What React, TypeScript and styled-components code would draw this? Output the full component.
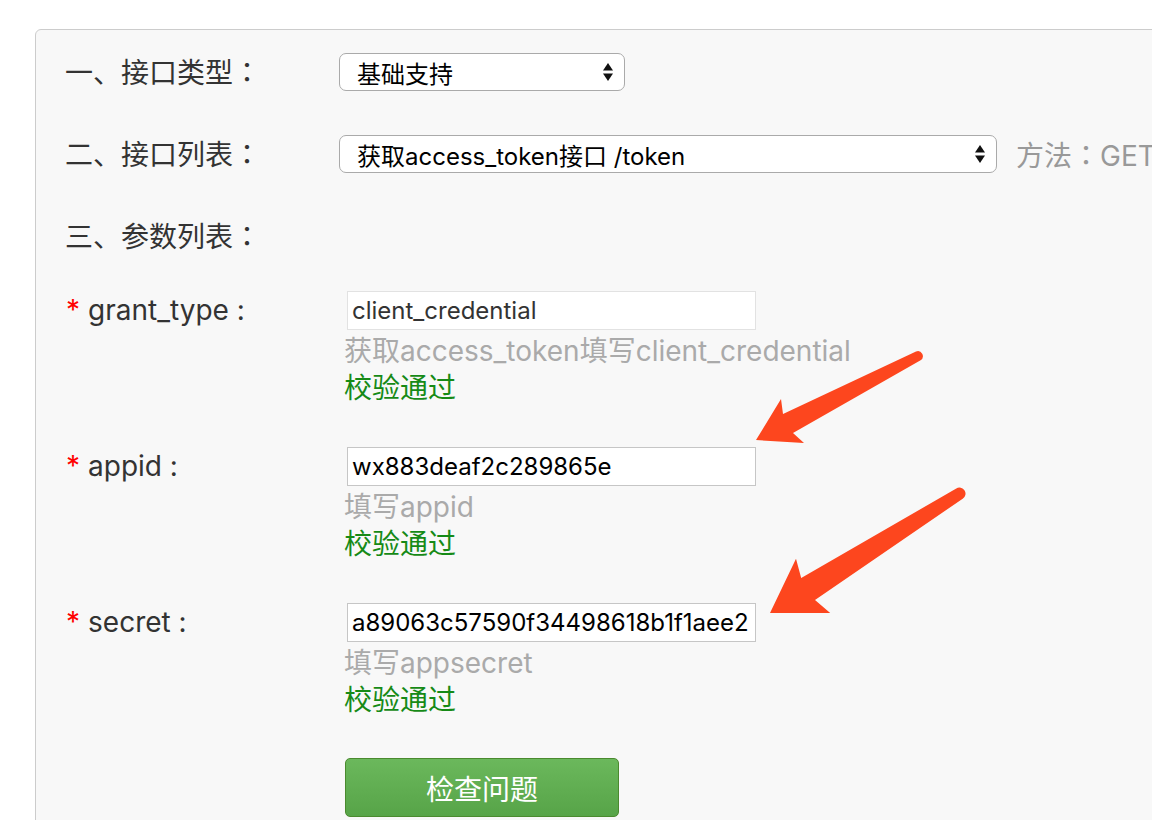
import React from 'react';
import styled, { createGlobalStyle } from 'styled-components';

const FONT = `Inter, "Noto Sans CJK SC", sans-serif`;

const GlobalStyle = createGlobalStyle`
  html, body {
    margin: 0;
    padding: 0;
    background: #ffffff;
    overflow: hidden;
  }
  body {
    font-family: ${FONT};
    color: #333333;
  }
`;

const Page = styled.div`
  position: relative;
  width: 1152px;
  height: 820px;
  overflow: hidden;
  padding: 29px 0 0 35px;
  box-sizing: border-box;
`;

const Panel = styled.div`
  width: 1200px;
  min-height: 900px;
  box-sizing: border-box;
  background: #f8f8f8;
  border: 1px solid #cccccc;
  border-radius: 6px;
  padding: 23px 0 0 29px;
`;

const TopRow = styled.div`
  display: flex;
  align-items: center;
  height: 38px;
  margin-bottom: 44px;
`;

const Label = styled.div`
  width: 274px;
  flex: 0 0 274px;
  font-size: 28px;
  line-height: 38px;
  color: #333333;
  white-space: nowrap;
`;

const Colon = styled.span`
  font-family: "Noto Sans CJK TC", sans-serif;
`;

const SelectBox = styled.div<{ $width: number }>`
  width: ${({ $width }) => $width}px;
  height: 38px;
  box-sizing: border-box;
  background: #ffffff;
  border: 1px solid #aaaaaa;
  border-radius: 7px;
  display: flex;
  align-items: center;
  justify-content: space-between;
  padding: 0 10px 0 17px;
  font-size: 24px;
  color: #000000;
  white-space: nowrap;
`;

const Method = styled.span`
  margin-left: 19px;
  font-size: 28px;
  color: #999999;
  white-space: nowrap;
`;

const ParamList = styled.div`
  margin-top: -8px;
`;

const ParamBlock = styled.div`
  display: flex;
  margin-bottom: 40px;
`;

const ParamLabel = styled.div`
  width: 274px;
  flex: 0 0 274px;
  height: 39px;
  font-size: 28px;
  line-height: 39px;
  color: #333333;
  padding-left: 1px;
  box-sizing: border-box;
  white-space: nowrap;
`;

const Star = styled.span`
  color: #ff0000;
  margin-right: 8px;
`;

const ParamBody = styled.div`
  display: flex;
  flex-direction: column;
  padding-left: 5px;
`;

const TextInput = styled.input<{ $light?: boolean }>`
  width: 409px;
  height: 39px;
  box-sizing: border-box;
  margin: 0 0 3px 3px;
  padding: 0 4px;
  border: 1px solid ${({ $light }) => ($light ? '#e2e2e2' : '#c6c6c6')};
  background: #ffffff;
  font-family: ${FONT};
  font-size: 24px;
  color: ${({ $light }) => ($light ? '#333333' : '#000000')};
  outline: none;
`;

const Hint = styled.div`
  font-size: 28px;
  line-height: 37px;
  color: #aaaaaa;
  white-space: nowrap;
`;

const Pass = styled.div`
  font-size: 28px;
  line-height: 37px;
  color: #168a16;
  white-space: nowrap;
`;

const ButtonRow = styled.div`
  padding-left: 280px;
  margin-top: -1px;
`;

const CheckButton = styled.button`
  width: 274px;
  height: 59px;
  box-sizing: border-box;
  border: 1px solid #4b8a2f;
  border-radius: 5px;
  background: linear-gradient(#6bb85c, #57a448);
  color: #ffffff;
  font-family: ${FONT};
  font-size: 28px;
  cursor: pointer;
`;

const Overlay = styled.svg`
  position: absolute;
  left: 0;
  top: 0;
  pointer-events: none;
`;

const Spinner = () => (
  <svg width="12" height="20" viewBox="0 0 12 20">
    <path d="M6 1 L11 8.5 L1 8.5 Z" fill="#111" />
    <path d="M6 19 L11 11.5 L1 11.5 Z" fill="#111" />
  </svg>
);

const params = [
  {
    name: 'grant_type',
    value: 'client_credential',
    hint: '获取access_token填写client_credential',
    light: true,
  },
  { name: 'appid', value: 'wx883deaf2c289865e', hint: '填写appid', light: false },
  {
    name: 'secret',
    value: 'a89063c57590f34498618b1f1aee2',
    hint: '填写appsecret',
    light: false,
  },
];

export default function App() {
  return (
    <>
      <GlobalStyle />
      <Page>
        <Panel>
          <TopRow>
            <Label>
              一、接口类型<Colon>：</Colon>
            </Label>
            <SelectBox $width={286}>
              <span>基础支持</span>
              <Spinner />
            </SelectBox>
          </TopRow>
          <TopRow>
            <Label>
              二、接口列表<Colon>：</Colon>
            </Label>
            <SelectBox $width={658}>
              <span>获取access_token接口 /token</span>
              <Spinner />
            </SelectBox>
            <Method>
              方法<Colon>：</Colon>GET
            </Method>
          </TopRow>
          <TopRow>
            <Label>
              三、参数列表<Colon>：</Colon>
            </Label>
          </TopRow>
          <ParamList>
            {params.map((p) => (
              <ParamBlock key={p.name}>
                <ParamLabel>
                  <Star>*</Star>
                  {p.name} :
                </ParamLabel>
                <ParamBody>
                  <TextInput readOnly value={p.value} $light={p.light} />
                  <Hint>{p.hint}</Hint>
                  <Pass>校验通过</Pass>
                </ParamBody>
              </ParamBlock>
            ))}
          </ParamList>
          <ButtonRow>
            <CheckButton>检查问题</CheckButton>
          </ButtonRow>
        </Panel>
        <Overlay width="1152" height="820" viewBox="0 0 1152 820">
          <path
            d="M756 440 L781 399 L783 414 L916 351.5 A5 5 0 0 1 920.6 360.3 L793 433 L804 443 Z"
            fill="#fd461e"
          />
          <path
            d="M770 613 L796 558.7 L801.2 578 L956.3 488.5 A6 6 0 0 1 962.7 498.7 L815 600 L830.2 612.9 Z"
            fill="#fd461e"
          />
        </Overlay>
      </Page>
    </>
  );
}
